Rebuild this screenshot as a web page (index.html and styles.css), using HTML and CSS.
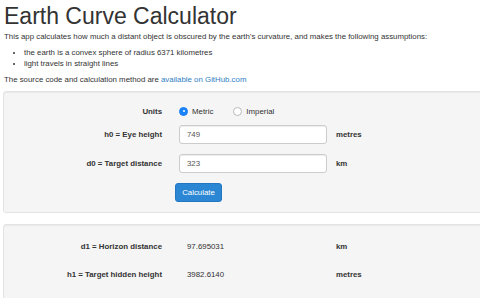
FILE: index.html
```html
<!DOCTYPE html>
<html>
<head>
<meta charset="utf-8">
<link rel="stylesheet" href="styles.css">
</head>
<body>
<div class="container">
  <h1 class="title">Earth Curve Calculator</h1>
  <p class="intro">This app calculates how much a distant object is obscured by the earth's curvature, and makes the following assumptions:</p>
  <ul class="assumptions">
    <li>the earth is a convex sphere of radius 6371 kilometres</li>
    <li>light travels in straight lines</li>
  </ul>
  <p class="source">The source code and calculation method are <a class="link" href="#">available on GitHub.com</a></p>

  <form class="well well-form">
    <div class="row row-units">
      <span class="label">Units</span>
      <div class="radios">
        <label class="radio"><span class="radio-dot checked"></span>Metric</label>
        <label class="radio"><span class="radio-dot"></span>Imperial</label>
      </div>
    </div>
    <div class="row">
      <span class="label">h0 = Eye height</span>
      <div class="input">749</div>
      <span class="unit">metres</span>
    </div>
    <div class="row">
      <span class="label">d0 = Target distance</span>
      <div class="input">323</div>
      <span class="unit">km</span>
    </div>
    <div class="actions">
      <button class="btn" type="button">Calculate</button>
    </div>
  </form>

  <div class="well well-results">
    <div class="row row-result">
      <span class="label">d1 = Horizon distance</span>
      <span class="value">97.695031</span>
      <span class="unit">km</span>
    </div>
    <div class="row row-result">
      <span class="label">h1 = Target hidden height</span>
      <span class="value">3982.6140</span>
      <span class="unit">metres</span>
    </div>
  </div>
</div>
</body>
</html>
```
FILE: styles.css
```css
html, body {
  margin: 0;
  padding: 0;
  background: #fff;
  overflow: hidden;
}
body {
  font-family: "Liberation Sans", Arial, sans-serif;
  font-size: 7.85px;
  line-height: 11px;
  color: #333;
}
.container {
  padding-left: 4px;
}
.title {
  margin: 4px 0 0 0;
  font-size: 23px;
  line-height: 24px;
  font-weight: normal;
  color: #333;
}
.intro {
  margin: 3px 0 0 0;
}
.assumptions {
  margin: 5px 0 0 0;
  padding-left: 20px;
}
.source {
  margin: 5px 0 0 0;
}
.link {
  color: #2f7ec4;
  text-decoration: none;
}
.well {
  margin-left: -1px;
  margin-right: -6px;
  background: #f5f5f5;
  border: 1px solid #e3e3e3;
  border-radius: 3px;
  box-shadow: inset 0 1px 1px rgba(0,0,0,0.05);
}
.well-form {
  margin-top: 6px;
  padding: 13px 0 10px 0;
  display: flex;
  flex-direction: column;
  gap: 10px;
}
.row {
  display: grid;
  grid-template-columns: 158px 165px auto;
  align-items: center;
}
.label {
  text-align: right;
  font-weight: bold;
}
.row > :nth-child(2) {
  margin-left: 17px;
}
.row > .unit {
  margin-left: 9px;
  font-weight: bold;
}
.row-units {
  height: 12px;
  margin-bottom: -2px;
}
.radios {
  display: flex;
  gap: 20px;
  grid-column: 2 / 4;
  margin-left: 12px;
}
.radio {
  display: flex;
  align-items: center;
  gap: 4px;
}
.radio-dot {
  width: 7px;
  height: 7px;
  border-radius: 50%;
  border: 1px solid #b9b9b9;
  background: #fff;
  box-sizing: content-box;
}
.radio-dot.checked {
  background: #1a82f7;
  border-color: #1a82f7;
  position: relative;
}
.radio-dot.checked::after {
  content: "";
  position: absolute;
  left: 2.5px;
  top: 2.5px;
  width: 2px;
  height: 2px;
  border-radius: 50%;
  background: #fff;
}
.input {
  height: 19px;
  box-sizing: border-box;
  background: #fff;
  border: 1px solid #ccc;
  border-radius: 3px;
  box-shadow: inset 0 1px 1px rgba(0,0,0,0.075);
  padding: 0 7px;
  line-height: 17px;
  color: #555;
}
.actions {
  padding-left: 171px;
}
.btn {
  font-family: inherit;
  font-size: 7.85px;
  color: #fff;
  background: #2b87d4;
  border: 1px solid #2277c0;
  border-radius: 3px;
  width: 47px;
  height: 19px;
  padding: 0;
  font-weight: normal;
}
.well-results {
  margin-top: 11px;
  padding: 16px 0 20px 0;
  display: flex;
  flex-direction: column;
  gap: 17px;
}
.row-result {
  height: 11px;
}
.value {
  color: #333;
}
.row-result > .value {
  margin-left: 25px;
}
.row-result > .unit {
  margin-left: 9px;
}
```
